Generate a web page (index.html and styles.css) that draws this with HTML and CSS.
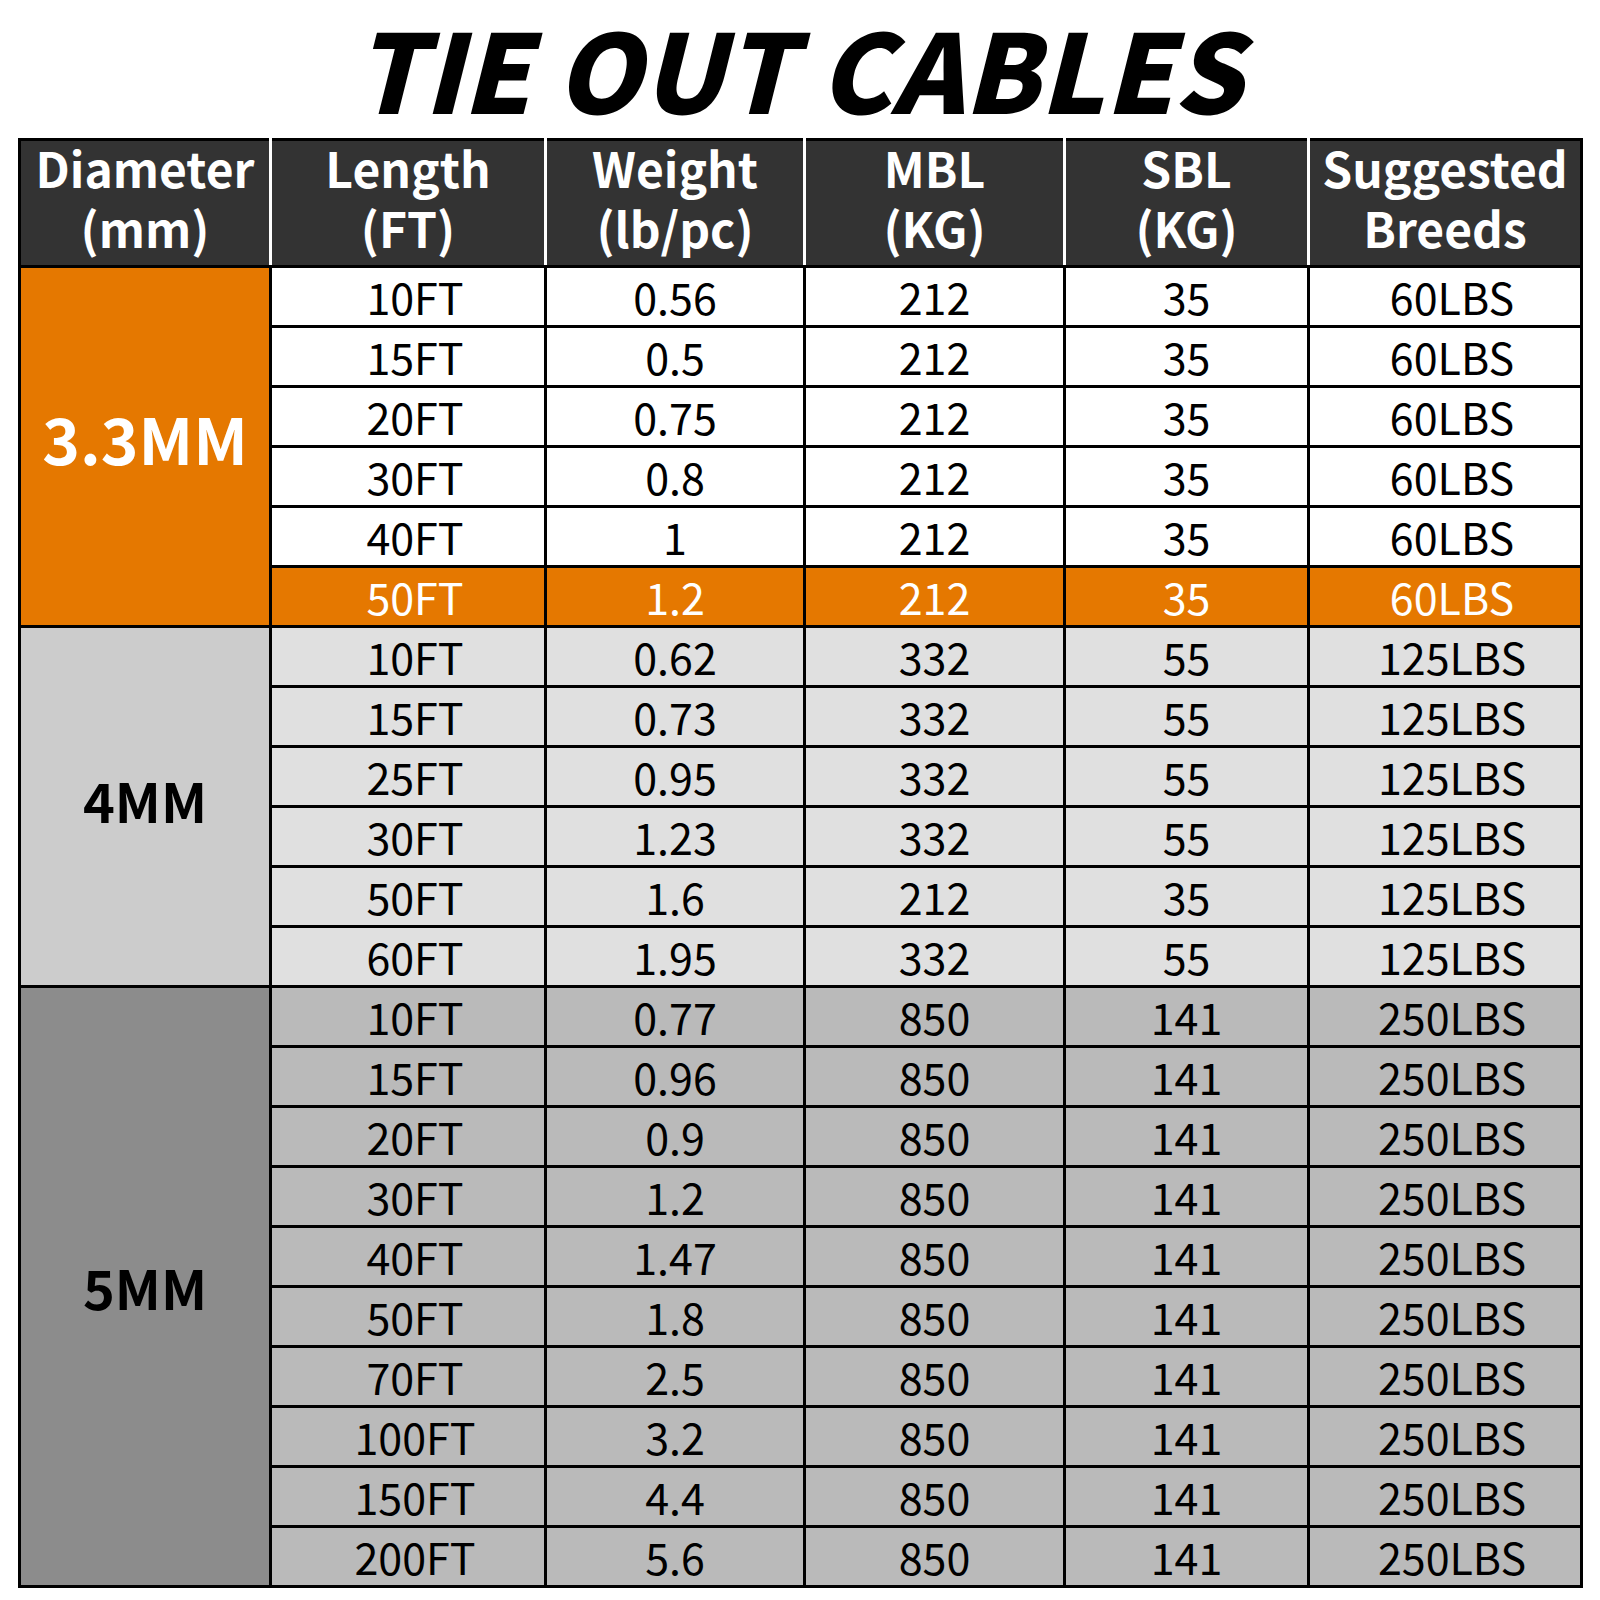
FILE: index.html
```html
<!DOCTYPE html>
<html>
<head>
<meta charset="utf-8">
<link rel="stylesheet" href="styles.css">
</head>
<body>
<div class="page">
  <h1 class="title">TIE OUT CABLES</h1>
  <table class="spec">
    <colgroup>
      <col class="c1"><col class="c2"><col class="c3"><col class="c4"><col class="c5"><col class="c6">
    </colgroup>
    <thead>
      <tr class="head">
        <th><div class="hd">Diameter<br>(mm)</div></th>
        <th><div class="hd">Length<br>(FT)</div></th>
        <th><div class="hd">Weight<br>(lb/pc)</div></th>
        <th><div class="hd">MBL<br>(KG)</div></th>
        <th><div class="hd">SBL<br>(KG)</div></th>
        <th><div class="hd">Suggested<br>Breeds</div></th>
      </tr>
    </thead>
    <tbody class="g33">
      <tr><td class="dia" rowspan="6">3.3MM</td><td>10FT</td><td>0.56</td><td>212</td><td>35</td><td>60LBS</td></tr>
      <tr><td>15FT</td><td>0.5</td><td>212</td><td>35</td><td>60LBS</td></tr>
      <tr><td>20FT</td><td>0.75</td><td>212</td><td>35</td><td>60LBS</td></tr>
      <tr><td>30FT</td><td>0.8</td><td>212</td><td>35</td><td>60LBS</td></tr>
      <tr><td>40FT</td><td>1</td><td>212</td><td>35</td><td>60LBS</td></tr>
      <tr class="hl"><td>50FT</td><td>1.2</td><td>212</td><td>35</td><td>60LBS</td></tr>
    </tbody>
    <tbody class="g4">
      <tr><td class="dia" rowspan="6">4MM</td><td>10FT</td><td>0.62</td><td>332</td><td>55</td><td>125LBS</td></tr>
      <tr><td>15FT</td><td>0.73</td><td>332</td><td>55</td><td>125LBS</td></tr>
      <tr><td>25FT</td><td>0.95</td><td>332</td><td>55</td><td>125LBS</td></tr>
      <tr><td>30FT</td><td>1.23</td><td>332</td><td>55</td><td>125LBS</td></tr>
      <tr><td>50FT</td><td>1.6</td><td>212</td><td>35</td><td>125LBS</td></tr>
      <tr><td>60FT</td><td>1.95</td><td>332</td><td>55</td><td>125LBS</td></tr>
    </tbody>
    <tbody class="g5">
      <tr><td class="dia" rowspan="10">5MM</td><td>10FT</td><td>0.77</td><td>850</td><td>141</td><td>250LBS</td></tr>
      <tr><td>15FT</td><td>0.96</td><td>850</td><td>141</td><td>250LBS</td></tr>
      <tr><td>20FT</td><td>0.9</td><td>850</td><td>141</td><td>250LBS</td></tr>
      <tr><td>30FT</td><td>1.2</td><td>850</td><td>141</td><td>250LBS</td></tr>
      <tr><td>40FT</td><td>1.47</td><td>850</td><td>141</td><td>250LBS</td></tr>
      <tr><td>50FT</td><td>1.8</td><td>850</td><td>141</td><td>250LBS</td></tr>
      <tr><td>70FT</td><td>2.5</td><td>850</td><td>141</td><td>250LBS</td></tr>
      <tr><td>100FT</td><td>3.2</td><td>850</td><td>141</td><td>250LBS</td></tr>
      <tr><td>150FT</td><td>4.4</td><td>850</td><td>141</td><td>250LBS</td></tr>
      <tr><td>200FT</td><td>5.6</td><td>850</td><td>141</td><td>250LBS</td></tr>
    </tbody>
  </table>
</div>
</body>
</html>
```

FILE: styles.css
```css
html, body {
  margin: 0;
  padding: 0;
  background: #ffffff;
}

.page {
  width: 1600px;
  font-family: "Noto Sans CJK SC", "Open Sans", sans-serif;
  color: #000;
}

.title {
  margin: 0;
  height: 138px;
  display: flex;
  align-items: center;
  justify-content: center;
  font-size: 109px;
  font-weight: 900;
  font-style: italic;
  letter-spacing: 0;
  line-height: 1;
  padding-left: 0;
  padding-right: 4px;
  padding-bottom: 6px;
  box-sizing: border-box;
}

.spec {
  margin-left: 18px;
  width: 1562px;
  border-collapse: collapse;
  table-layout: fixed;
  border: 3px solid #000;
}

.c1 { width: 251px; }
.c2 { width: 275px; }
.c3 { width: 259px; }
.c4 { width: 260px; }
.c5 { width: 244px; }
.c6 { width: 273px; }

.head th {
  background: #333333;
  color: #fff;
  font-weight: 700;
  font-size: 48px;
  line-height: 60px;
  height: 124px;
  padding: 0;
  border-left: 3px solid #fff;
  border-right: 3px solid #fff;
  border-bottom: 3px solid #000;
  border-top: 3px solid #000;
  text-align: center;
  vertical-align: top;
}
.head th:first-child { border-left: 3px solid #000; }
.head th:last-child { border-right: 3px solid #000; }

.hd {
  margin-top: -4px;
}

.spec td {
  height: 57px;
  padding: 0;
  border: 3px solid #000;
  text-align: center;
  vertical-align: middle;
  font-size: 43px;
  line-height: 57px;
  font-weight: 400;
}

.spec td:nth-last-child(5),
.spec td:last-child {
  padding-left: 14px;
}

.spec td.dia {
  font-weight: 700;
  font-size: 54px;
  padding-left: 0;
  padding-bottom: 14px;
}

.g33 td { background: #ffffff; }
.g33 td.dia { background: #e57800; color: #fff; font-size: 64px; padding-bottom: 18px; }
.g33 tr.hl td { background: #e57800; color: #fff; }

.g4 td { background: #e0e0e0; }
.g4 td.dia { background: #cccccc; }

.g5 td { background: #bababa; }
.g5 td.dia { background: #8c8c8c; padding-bottom: 0; }
```
